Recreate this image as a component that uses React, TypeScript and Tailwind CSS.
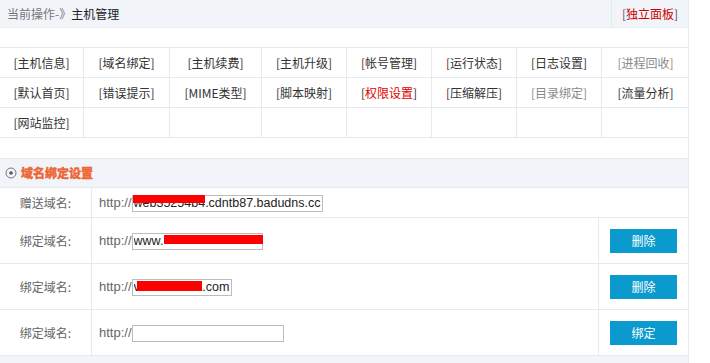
import { ReactNode } from "react";

const menu: { label: string; tone?: "gray" | "red" }[][] = [
  [
    { label: "主机信息" },
    { label: "域名绑定" },
    { label: "主机续费" },
    { label: "主机升级" },
    { label: "帐号管理" },
    { label: "运行状态" },
    { label: "日志设置" },
    { label: "进程回收", tone: "gray" },
  ],
  [
    { label: "默认首页" },
    { label: "错误提示" },
    { label: "MIME类型" },
    { label: "脚本映射" },
    { label: "权限设置", tone: "red" },
    { label: "压缩解压" },
    { label: "目录绑定", tone: "gray" },
    { label: "流量分析" },
  ],
  [{ label: "网站监控" }],
];

function MenuItem({ label, tone }: { label: string; tone?: "gray" | "red" }) {
  if (tone === "red") {
    return (
      <span className="text-[#333]">
        [<span className="text-[#e00000]">{label}</span>]
      </span>
    );
  }
  return (
    <span className={tone === "gray" ? "text-[#8a8a8a]" : "text-[#333]"}>
      [{label}]
    </span>
  );
}

function DomainInput({
  width,
  value,
  redLeft,
  redWidth,
  redTop,
  redHeight = 8,
}: {
  width: number;
  value: string;
  redLeft?: number;
  redWidth?: number;
  redTop?: number;
  redHeight?: number;
}) {
  return (
    <div className="relative" style={{ width }}>
      <input
        readOnly
        defaultValue={value}
        className="h-[17px] w-full border border-[#bdbdbd] bg-white px-[1px] text-[12.5px] leading-[15px] text-[#222] outline-none font-['Liberation_Sans',Arial,sans-serif]"
      />
      {redWidth ? (
        <span
          className="absolute bg-[#ff0000]"
          style={{ left: redLeft, width: redWidth, top: redTop, height: redHeight }}
        />
      ) : null}
    </div>
  );
}

function Row({
  label,
  h,
  children,
  button,
}: {
  label: string;
  h: string;
  children: ReactNode;
  button?: string;
}) {
  return (
    <div className={`flex border-b border-[#e6e9ee] ${h}`}>
      <div className="flex w-[92px] shrink-0 items-center justify-center border-r border-[#e6e9ee] text-[#666]">
        {label}
      </div>
      <div className="flex flex-1 items-center pl-[7px]">
        <span className="text-[13px] text-[#666] font-['Liberation_Sans',Arial,sans-serif]">
          http://
        </span>
        {children}
      </div>
      {button ? (
        <div className="flex w-[90px] shrink-0 items-center justify-center border-l border-[#e6e9ee]">
          <button className="h-[24px] w-[67px] bg-[#0a9acd] text-[12px] text-white">
            {button}
          </button>
        </div>
      ) : null}
    </div>
  );
}

export default function App() {
  return (
    <div className="h-[363px] w-[710px] overflow-hidden bg-white text-[12px] font-['Noto_Sans_CJK_SC','Microsoft_YaHei',sans-serif]">
      <div className="w-[689px] border-r border-[#e6e9ee]">
        {/* breadcrumb */}
        <div className="flex h-[28px] items-center border-b border-[#e9ecf1] bg-[#f1f4f9]">
          <div className="flex-1 pl-[7px]">
            <span className="text-[#777]">当前操作-》</span>
            <span className="text-[#222]">主机管理</span>
          </div>
          <div className="flex h-full w-[77px] items-center justify-center border-l border-[#e6e9ee]">
            <span className="text-[#555]">
              [<span className="text-[#cc0000]">独立面板</span>]
            </span>
          </div>
        </div>

        {/* menu */}
        <div className="mt-[19px] border-t border-[#e6e9ee]">
          {menu.map((row, i) => (
            <div
              key={i}
              className="grid h-[30px] grid-cols-[84px_86px_92px_85px_85px_85px_85px_87px] border-b border-[#e6e9ee]"
            >
              {Array.from({ length: 8 }).map((_, j) => (
                <div
                  key={j}
                  className="flex items-center justify-center border-r border-[#e6e9ee] last:border-r-0"
                >
                  {row[j] ? <MenuItem {...row[j]} /> : null}
                </div>
              ))}
            </div>
          ))}
        </div>

        {/* section */}
        <div className="mt-[20px] flex h-[30px] items-center border-t border-b border-[#e6e9ee] bg-[#f1f4f9] pl-[5px]">
          <svg width="12" height="12" viewBox="0 0 12 12" className="mr-[4px]">
            <circle cx="6" cy="6" r="5" fill="none" stroke="#777" strokeWidth="1" />
            <circle cx="6" cy="6" r="1.8" fill="#555" />
          </svg>
          <span className="font-bold text-[#ee6433] [-webkit-text-stroke:0.5px_#ee6433]">
            域名绑定设置
          </span>
        </div>

        <Row label="赠送域名:" h="h-[30px]">
          <DomainInput
            width={191}
            value="web35254b4.cdntb87.badudns.cc"
            redLeft={1}
            redWidth={72}
            redTop={2}
          />
        </Row>
        <Row label="绑定域名:" h="h-[46px]" button="删除">
          <DomainInput width={131} value="www." redLeft={32} redWidth={99} redTop={4} redHeight={9} />
        </Row>
        <Row label="绑定域名:" h="h-[46px]" button="删除">
          <DomainInput width={100} value="vxxxxxxxxxx.com" redLeft={5} redWidth={65} redTop={4} redHeight={10} />
        </Row>
        <Row label="绑定域名:" h="h-[46px]" button="绑定">
          <DomainInput width={152} value="" />
        </Row>
        <div className="h-[10px] bg-[#f1f4f9]" />
      </div>
    </div>
  );
}
